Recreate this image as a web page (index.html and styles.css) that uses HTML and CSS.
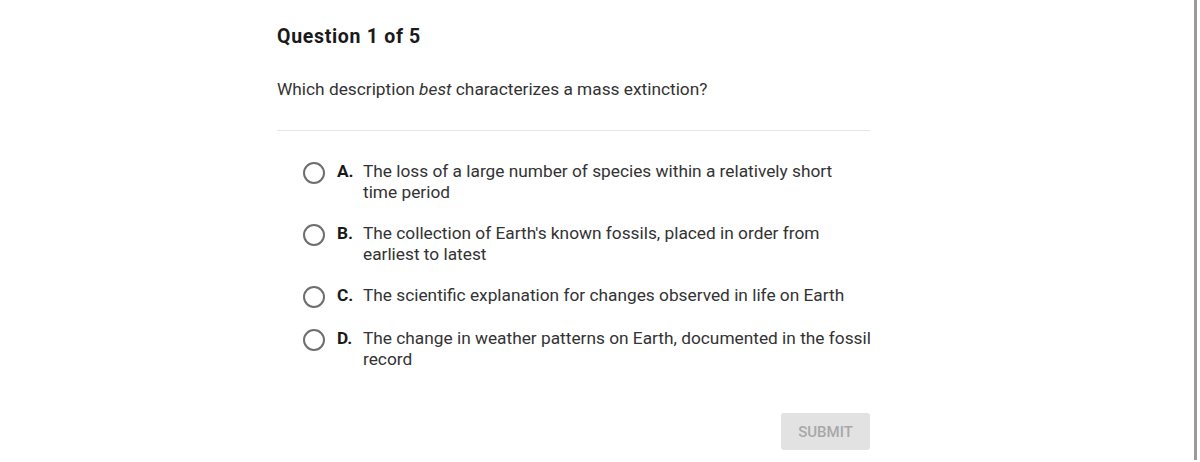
FILE: index.html
```html
<!DOCTYPE html>
<html>
<head>
<meta charset="utf-8">
<link rel="stylesheet" href="styles.css">
</head>
<body>
<div class="page">
  <main class="quiz">
    <h1 class="title">Question 1 of 5</h1>
    <p class="prompt">Which description <em>best</em> characterizes a mass extinction?</p>
    <hr class="divider">
    <ul class="options">
      <li class="option"><span class="radio"></span><span class="letter">A.</span><span class="text">The loss of a large number of species within a relatively short time&nbsp;period</span></li>
      <li class="option"><span class="radio"></span><span class="letter">B.</span><span class="text">The collection of Earth's known fossils, placed in order from earliest to latest</span></li>
      <li class="option"><span class="radio"></span><span class="letter">C.</span><span class="text">The scientific explanation for changes observed in life on Earth</span></li>
      <li class="option"><span class="radio"></span><span class="letter">D.</span><span class="text">The change in weather patterns on Earth, documented in the fossil record</span></li>
    </ul>
    <div class="actions"><button class="submit">SUBMIT</button></div>
  </main>
  <div class="scrollbar"></div>
</div>
</body>
</html>
```
FILE: styles.css
```css
html, body {
  margin: 0;
  padding: 0;
  background: #ffffff;
}
body {
  font-family: Roboto, "Noto Sans", sans-serif;
  color: #333333;
  width: 1200px;
  height: 462px;
  overflow: hidden;
}
.page {
  display: flex;
  height: 462px;
}
.quiz {
  margin-left: 277px;
  width: 593px;
  padding-top: 25px;
}
.title {
  margin: 0;
  font-size: 19.5px;
  font-weight: 700;
  letter-spacing: 0.7px;
  line-height: 24px;
  color: #1a1a1a;
}
.prompt {
  margin: 28px 0 0 0;
  font-size: 17.3px;
  line-height: 24px;
  color: #333;
}
.prompt em {
  font-style: italic;
}
.divider {
  margin: 29px 0 0 0;
  border: 0;
  border-top: 1px solid #e6e6e6;
  height: 0;
}
.options {
  list-style: none;
  margin: 30px 0 0 0;
  padding: 0;
  display: flex;
  flex-direction: column;
  gap: 20px;
}
.option {
  display: flex;
  align-items: flex-start;
  font-size: 17.3px;
  line-height: 21px;
  color: #333;
}
.radio {
  flex: none;
  width: 18px;
  height: 18px;
  border: 2px solid #6e6e6e;
  border-radius: 50%;
  margin-left: 26px;
  margin-top: 1px;
  margin-right: 12px;
}
.letter {
  flex: none;
  width: 26px;
  font-weight: 700;
  color: #1a1a1a;
}
.text {
  flex: none;
  width: 516px;
}
.actions {
  display: flex;
  justify-content: flex-end;
  margin-top: 43px;
}
.submit {
  width: 89px;
  height: 37px;
  border: 0;
  border-radius: 3px;
  background: #e2e2e2;
  color: #a8a8a8;
  font-family: Roboto, sans-serif;
  font-size: 15px;
  font-weight: 500;
  padding: 0;
}
.scrollbar {
  margin-left: auto;
  margin-right: 3px;
  width: 3px;
  height: 460px;
  background: #9a9a9a;
}
```
